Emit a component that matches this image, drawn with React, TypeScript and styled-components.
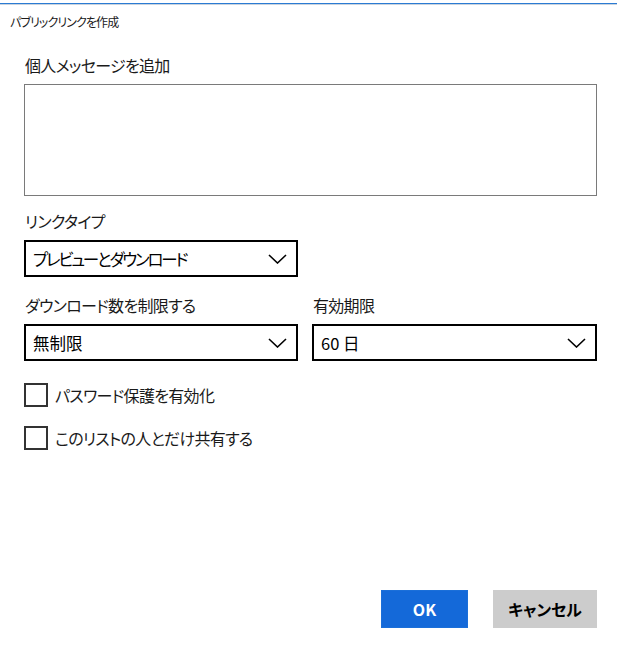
import styled, { createGlobalStyle } from "styled-components";

const GlobalStyle = createGlobalStyle`
  html, body {
    margin: 0;
    padding: 0;
    background: #ffffff;
  }
  body {
    font-family: "Noto Sans CJK JP", "Noto Sans", sans-serif;
    font-feature-settings: "palt" 1;
    color: #000000;
  }
`;

const Dialog = styled.div`
  height: 100vh;
  box-sizing: border-box;
  padding-top: 3px;
  display: flex;
  flex-direction: column;
`;

const WindowEdge = styled.div`
  height: 1px;
  background: #2b7bd3;
  border-bottom: 1px solid #c9d3de;
  margin-right: 1px;
`;

const WindowTitle = styled.div`
  font-size: 12px;
  line-height: 18px;
  letter-spacing: -0.9px;
  padding: 8px 0 0 10px;
  color: #1a1a1a;
`;

const Content = styled.div`
  padding: 5px 21px 0 24px;
  display: flex;
  flex-direction: column;
`;

const Field = styled.div<{ $top?: number }>`
  display: flex;
  flex-direction: column;
  gap: 8px;
  margin-top: ${(p) => p.$top ?? 0}px;
  min-width: 0;
`;

const Label = styled.div`
  font-size: 16px;
  line-height: 22px;
  letter-spacing: -0.7px;
  padding-left: 1px;
  color: #1a1a1a;
`;

const MessageBox = styled.textarea`
  box-sizing: border-box;
  height: 112px;
  border: 1px solid #7a7a7a;
  resize: none;
  outline: none;
  font: inherit;
  margin: 0;
`;

const Row = styled.div`
  display: grid;
  grid-template-columns: 274px 1fr;
  column-gap: 14px;
  margin-top: 17px;
`;

const SelectBox = styled.div<{ $half?: boolean }>`
  box-sizing: border-box;
  height: 37px;
  width: ${(p) => (p.$half ? "274px" : "100%")};
  border: 2px solid #000000;
  display: flex;
  align-items: center;
  justify-content: space-between;
  padding: 0 9px 0 7px;
  font-size: 16.5px;
  color: #000000;
`;

const SelectValue = styled.span<{ $condensed?: boolean }>`
  letter-spacing: ${(p) => (p.$condensed ? "-2.2px" : "0")};
`;

const Chevron = () => (
  <svg width="19" height="10" viewBox="0 0 19 10" fill="none">
    <path d="M1 1 L9.5 9 L18 1" stroke="#000" strokeWidth="1.6" />
  </svg>
);

const Checks = styled.div`
  display: flex;
  flex-direction: column;
  gap: 19px;
  margin-top: 22px;
`;

const CheckRow = styled.label`
  display: flex;
  align-items: center;
  gap: 7px;
  font-size: 16px;
  line-height: 24px;
  letter-spacing: -0.7px;
  color: #1a1a1a;
`;

const CheckBox = styled.span`
  box-sizing: border-box;
  width: 24px;
  height: 24px;
  border: 2px solid #333333;
  background: #ffffff;
  flex-shrink: 0;
`;

const Footer = styled.div`
  margin-top: auto;
  display: flex;
  justify-content: flex-end;
  gap: 25px;
  padding: 0 21px 29px 0;
`;

const Button = styled.button<{ $primary?: boolean }>`
  box-sizing: border-box;
  height: 38px;
  width: ${(p) => (p.$primary ? "87px" : "104px")};
  border: 1px solid ${(p) => (p.$primary ? "#1b6fd9" : "#cccccc")};
  background: ${(p) => (p.$primary ? "#1469d9" : "#cccccc")};
  color: ${(p) => (p.$primary ? "#ffffff" : "#000000")};
  font-family: inherit;
  font-feature-settings: "palt" 1;
  font-size: 16px;
  font-weight: 700;
  padding: 0;
`;

export default function App() {
  return (
    <>
      <GlobalStyle />
      <Dialog>
        <WindowEdge />
        <WindowTitle>パブリックリンクを作成</WindowTitle>
        <Content>
          <Field $top={18}>
            <Label>個人メッセージを追加</Label>
            <MessageBox />
          </Field>
          <Field $top={14}>
            <Label>リンクタイプ</Label>
            <SelectBox $half>
              <SelectValue $condensed>プレビューとダウンロード</SelectValue>
              <Chevron />
            </SelectBox>
          </Field>
          <Row>
            <Field>
              <Label>ダウンロード数を制限する</Label>
              <SelectBox>
                <SelectValue>無制限</SelectValue>
                <Chevron />
              </SelectBox>
            </Field>
            <Field>
              <Label>有効期限</Label>
              <SelectBox>
                <SelectValue>60 日</SelectValue>
                <Chevron />
              </SelectBox>
            </Field>
          </Row>
          <Checks>
            <CheckRow>
              <CheckBox />
              パスワード保護を有効化
            </CheckRow>
            <CheckRow>
              <CheckBox />
              このリストの人とだけ共有する
            </CheckRow>
          </Checks>
        </Content>
        <Footer>
          <Button $primary>OK</Button>
          <Button>キャンセル</Button>
        </Footer>
      </Dialog>
    </>
  );
}
